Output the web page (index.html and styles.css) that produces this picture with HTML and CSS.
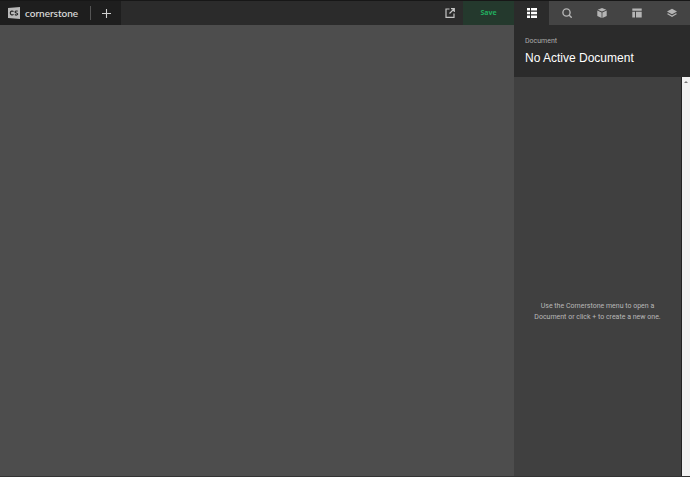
FILE: index.html
```html
<!DOCTYPE html>
<html lang="en">
<head>
<meta charset="utf-8">
<title>Cornerstone</title>
<link rel="stylesheet" href="styles.css">
</head>
<body>
<div class="app">
  <main class="workspace">
    <header class="topbar">
      <div class="brand">
        <a class="logo" href="#">
          <svg class="mark" viewBox="0 0 13 13" aria-hidden="true">
            <path d="M0 1 13 0V13L0 12Z" fill="#b9b9b9"/>
            <path d="M6 5C5 4 2.500 4.200 2.500 6.500S5 9 6 8M10.500 4.700C9.500 4 7.700 4.300 7.700 5.400C7.700 6.800 10.500 6.100 10.500 7.600C10.500 8.900 8.500 9 7.400 8.200" fill="none" stroke="#292929" stroke-width="1.300"/>
          </svg>
          <span class="wordmark">cornerstone</span>
        </a>
        <button class="add" type="button" aria-label="New document">
          <svg viewBox="0 0 10 10"><path d="M5 0V10M0 5H10" stroke="#d0d0d0" stroke-width="1.200"/></svg>
        </button>
      </div>
      <button class="preview" type="button" aria-label="Open preview">
        <svg viewBox="0 0 10 10" fill="none" stroke="#c4c4c4" stroke-width="1.200"><path d="M4.500 1H1V9.300H9V5.500M6 .7H9.300V4M9 1 4.500 5.500"/></svg>
      </button>
      <button class="save" type="button">Save</button>
    </header>
    <section class="canvas" aria-label="Canvas"></section>
  </main>
  <aside class="inspector">
    <nav class="tabs">
      <button class="tab active" type="button" aria-label="Outline">
        <svg viewBox="0 0 10 10" fill="#fff"><path d="M0 0H3V2.600H0ZM4 0H10V2.600H4ZM0 3.700H3V6.300H0ZM4 3.700H10V6.300H4ZM0 7.400H3V10H0ZM4 7.400H10V10H4Z"/></svg>
      </button>
      <button class="tab" type="button" aria-label="Search">
        <svg viewBox="0 0 10 10" fill="none" stroke="#b5b5b5" stroke-width="1.400"><circle cx="4.500" cy="4.500" r="3.600"/><path d="m7 7 2.700 2.700"/></svg>
      </button>
      <button class="tab" type="button" aria-label="Elements">
        <svg viewBox="0 0 10 10" fill="#b5b5b5"><path d="M5 0 9.300 1.800 5 3.600.7 1.800ZM.3 2.600 4.600 4.400V10L.3 8.100ZM9.700 2.600 5.400 4.400V10L9.700 8.100Z"/></svg>
      </button>
      <button class="tab" type="button" aria-label="Templates">
        <svg viewBox="0 0 10 10" fill="#b5b5b5"><path d="M.3.500H9.700V2.700H.3ZM.3 3.700H3V9.500H.3ZM4 3.700H9.700V9.500H4Z"/></svg>
      </button>
      <button class="tab" type="button" aria-label="Layers">
        <svg viewBox="0 0 10 10" fill="#b5b5b5"><path d="M5 .8 10 3.600 5 6.300 0 3.600ZM1 5.300 5 7.500 9 5.300 10 6 5 9 0 6Z"/></svg>
      </button>
    </nav>
    <header class="heading">
      <p class="kind">Document</p>
      <h1 class="title">No Active Document</h1>
    </header>
    <div class="pane">
      <p class="hint">Use the Cornerstone menu to open a<br>Document or click + to create a new one.</p>
      <div class="scrollbar" aria-hidden="true"><span class="arrow"></span></div>
    </div>
  </aside>
</div>
</body>
</html>
```
FILE: styles.css
```css
* { box-sizing: border-box; }
body {
  margin: 0;
  background: #4d4d4d;
  font-family: "Liberation Sans", Arial, sans-serif;
}
button {
  display: flex;
  align-items: center;
  justify-content: center;
  margin: 0;
  padding: 0;
  border: 0;
  background: none;
}
.app {
  display: flex;
  height: 100vh;
  border-top: 1px solid #171717;
  border-bottom: 1px solid #333;
}
.workspace {
  display: flex;
  flex: 1;
  flex-direction: column;
}
.topbar {
  display: flex;
  height: 24px;
  background: #2b2b2b;
}
.brand {
  display: flex;
  align-items: center;
  margin-right: auto;
  padding-left: 8px;
  background: #1e1e1e;
}
.logo {
  display: flex;
  align-items: center;
  gap: 5px;
  width: 83px;
  height: 14px;
  border-right: 1px solid #555;
  text-decoration: none;
}
.mark { width: 12px; height: 12px; }
.wordmark {
  color: #e0e0e0;
  font: 500 10px/12px Lato, sans-serif;
}
.add { width: 30px; height: 24px; }
.add svg { width: 9px; height: 9px; }
.preview { width: 26px; }
.preview svg { width: 10px; height: 10px; }
.save {
  width: 51px;
  background: #24392d;
  color: #22ad5f;
  font: 700 7px/10px "Open Sans", sans-serif;
}
.canvas { flex: 1; background: #4d4d4d; }
.inspector {
  display: flex;
  flex-direction: column;
  width: 176px;
  background: #404040;
}
.tabs { display: flex; height: 24px; }
.tab { flex: 1; background: #444; }
.active { background: #2b2b2b; }
.tab svg { width: 10px; height: 10px; }
.heading {
  height: 52px;
  padding: 11px;
  background: #2b2b2b;
}
.kind, .title, .hint { margin: 0; }
.kind {
  color: #acacac;
  font: 7px/10px Roboto, sans-serif;
}
.title {
  margin-top: 4px;
  color: #fff;
  font-size: 12px;
  font-weight: 400;
  line-height: 16px;
}
.pane { display: flex; flex: 1; }
.hint {
  flex: 1;
  align-self: center;
  padding-top: 70px;
  color: #b8b8b8;
  font: 7px/11px Roboto, sans-serif;
  text-align: center;
}
.scrollbar {
  width: 9px;
  padding: 4px 2px;
  border-left: 1px solid #222;
  background: #f1f1f1;
}
.arrow {
  display: block;
  width: 4px;
  border: 2px solid transparent;
  border-top: 0;
  border-bottom-color: #777;
}
```
